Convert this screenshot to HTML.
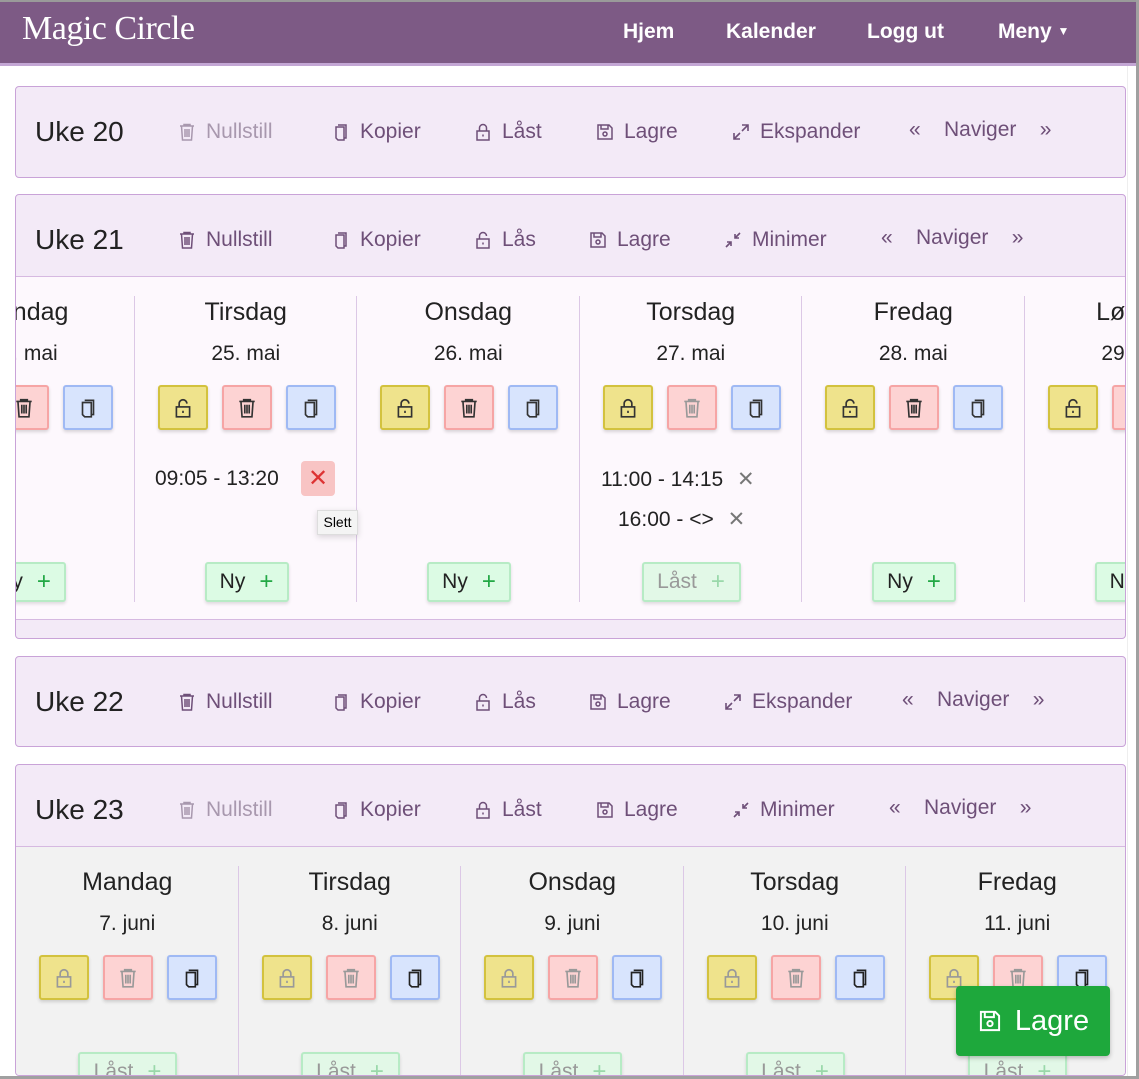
<!DOCTYPE html>
<html style="overflow:hidden;width:1139px;height:1079px"><head><meta charset="utf-8">
<style>
*{box-sizing:border-box;margin:0;padding:0}
body{width:1139px;height:1079px;overflow:hidden;background:#fff;font-family:"Liberation Sans",sans-serif;position:relative}
.a{position:absolute}
.nav{left:0;top:0;width:1139px;height:66px;background:#7d5a85;border-top:2px solid #9a9a9a;border-bottom:3px solid #c3a6d4}
.logo{left:22px;top:10px;color:#fff;font-family:"Liberation Serif",serif;font-size:34px;letter-spacing:-0.5px}
.nl{color:#fff;font-weight:bold;font-size:21px;top:20px}
.card{left:15px;width:1111px;border:1px solid #c9a3d8;border-radius:4px;background:#f3eaf7;overflow:hidden}
.uke{font-size:28px;color:#222;left:19px}
.hi{font-size:21px;color:#6e4f78;display:flex;align-items:center;gap:9px;white-space:nowrap}
.hi.g{color:#a898ae}
.hi svg{width:20px;height:20px;flex-shrink:0}
.body{left:0;width:1111px;overflow:hidden}
.col{position:absolute;top:0;width:222.5px;text-align:center}
.dn{font-size:25px;color:#222;position:absolute;width:100%;top:21px}
.dd{font-size:21px;color:#222;position:absolute;width:100%;top:65px}
.btns{position:absolute;top:108px;left:23px;display:flex;gap:14px}
.b{width:50px;height:45px;border-radius:3px;display:flex;align-items:center;justify-content:center;box-shadow:0 2px 3px rgba(0,0,0,.15)}
.y{background:#efe38c;border:2px solid #d3c23e}
.r{background:#fdd3d3;border:2px solid #f6a5a5}
.bl{background:#d8e4fd;border:2px solid #9fb9f4}
.b svg{width:22px;height:22px;flex-shrink:0}
.dv{position:absolute;top:0;bottom:0;width:1px;background:#dcc8e6}
.ny{position:absolute;height:40px;border:2px solid #b7ebc5;background:#dcfbe4;border-radius:3px;font-size:21px;color:#222;display:flex;align-items:center;justify-content:center;gap:14px;box-shadow:0 2px 3px rgba(0,0,0,.12)}
.ny .p{color:#22a845;font-size:24px}
.ny.f{color:#999;background:#e2f8e7}
.ny.f .p{color:#9ad8aa}
.t{font-size:21px;color:#222}
</style></head><body>
<svg width="0" height="0" style="position:absolute">
<defs>
<symbol id="trash" viewBox="0 0 20 20"><path d="M3 4h14M7 4V2.5h6V4M4.5 4l1 14h9l1-14M8 7v8M10 7v8M12 7v8" fill="none" stroke="currentColor" stroke-width="1.5"/></symbol>
<symbol id="copy" viewBox="0 0 20 20"><path d="M7 3h8v13h-2M5 5h8v13H7l-2-2z" fill="none" stroke="currentColor" stroke-width="1.5"/></symbol>
<symbol id="lockc" viewBox="0 0 20 20"><rect x="4" y="9" width="12" height="9" fill="none" stroke="currentColor" stroke-width="1.5"/><path d="M6.5 9V6a3.5 3.5 0 0 1 7 0v3M10 12.5v2" fill="none" stroke="currentColor" stroke-width="1.5"/></symbol>
<symbol id="locko" viewBox="0 0 20 20"><rect x="4" y="9" width="12" height="9" fill="none" stroke="currentColor" stroke-width="1.5"/><path d="M6.5 9V6a3.5 3.5 0 0 1 7 0M10 12.5v2" fill="none" stroke="currentColor" stroke-width="1.5"/></symbol>
<symbol id="save" viewBox="0 0 20 20"><path d="M3 3h11l3 3v11H3zM6 3v4h7V3" fill="none" stroke="currentColor" stroke-width="1.5"/><circle cx="10" cy="12" r="2" fill="none" stroke="currentColor" stroke-width="1.5"/></symbol>
<symbol id="exp" viewBox="0 0 20 20"><path d="M11 3h6v6M17 3l-6 6M9 17H3v-6M3 17l6-6" fill="none" stroke="currentColor" stroke-width="1.6"/></symbol>
<symbol id="min" viewBox="0 0 20 20"><path d="M17 3l-5 5M12 4v4h4M3 17l5-5M4 12h4v4" fill="none" stroke="currentColor" stroke-width="1.6"/></symbol>
</defs></svg>

<div class="a nav"></div>
<div class="a logo">Magic Circle</div>
<div class="a nl" style="left:623px">Hjem</div>
<div class="a nl" style="left:726px">Kalender</div>
<div class="a nl" style="left:867px">Logg ut</div>
<div class="a nl" style="left:998px">Meny <span style="font-size:12px;vertical-align:3px">▼</span></div>
<div class="a" style="left:1127px;top:66px;width:12px;height:1013px;background:#fff;border-left:1px solid #eee"></div>
<div class="a" style="left:1136px;top:0;width:3px;height:1079px;background:#a0a0a0"></div>

<div class="a card" style="top:86px;height:92px">
 <div class="a uke" style="top:29px">Uke 20</div>
 <div class="a hi g" style="left:161px;top:33px"><svg><use href="#trash"/></svg>Nullstill</div>
 <div class="a hi" style="left:315px;top:33px"><svg><use href="#copy"/></svg>Kopier</div>
 <div class="a hi" style="left:457px;top:33px"><svg><use href="#lockc"/></svg>Låst</div>
 <div class="a hi" style="left:579px;top:33px"><svg><use href="#save"/></svg>Lagre</div>
 <div class="a hi" style="left:715px;top:33px"><svg><use href="#exp"/></svg>Ekspander</div>
 <div class="a hi" style="left:893px;top:31px">«&nbsp;&nbsp;&nbsp;&nbsp;Naviger&nbsp;&nbsp;&nbsp;&nbsp;»</div>
</div>

<div class="a card" style="top:194px;height:445px">
 <div class="a uke" style="top:29px">Uke 21</div>
 <div class="a hi" style="left:161px;top:33px"><svg><use href="#trash"/></svg>Nullstill</div>
 <div class="a hi" style="left:315px;top:33px"><svg><use href="#copy"/></svg>Kopier</div>
 <div class="a hi" style="left:457px;top:33px"><svg><use href="#locko"/></svg>Lås</div>
 <div class="a hi" style="left:572px;top:33px"><svg><use href="#save"/></svg>Lagre</div>
 <div class="a hi" style="left:707px;top:33px"><svg><use href="#min"/></svg>Minimer</div>
 <div class="a hi" style="left:865px;top:31px">«&nbsp;&nbsp;&nbsp;&nbsp;Naviger&nbsp;&nbsp;&nbsp;&nbsp;»</div>
 <div class="a body" style="top:81px;height:344px;background:#fdf8fd;border-top:1px solid #d6b9e1;border-bottom:1px solid #d6b9e1">
  <div class="a" style="left:-104px;top:0;width:1400px;height:344px">
   <div class="dv" style="left:222px;top:19px;bottom:19px"></div>
   <div class="dv" style="left:444px;top:19px;bottom:19px"></div>
   <div class="dv" style="left:667px;top:19px;bottom:19px"></div>
   <div class="dv" style="left:889px;top:19px;bottom:19px"></div>
   <div class="dv" style="left:1112px;top:19px;bottom:19px"></div>
   <div class="col" style="left:0"><div class="dn">Mandag</div><div class="dd">24. mai</div>
    <div class="btns"><div class="b y" style="color:#333"><svg><use href="#locko"/></svg></div><div class="b r" style="color:#333"><svg><use href="#trash"/></svg></div><div class="b bl" style="color:#333"><svg><use href="#copy"/></svg></div></div>
    <div class="ny" style="left:70px;top:285px;width:84px">Ny <span class="p">+</span></div></div>
   <div class="col" style="left:222.5px"><div class="dn">Tirsdag</div><div class="dd">25. mai</div>
    <div class="btns"><div class="b y" style="color:#333"><svg><use href="#locko"/></svg></div><div class="b r" style="color:#333"><svg><use href="#trash"/></svg></div><div class="b bl" style="color:#333"><svg><use href="#copy"/></svg></div></div>
    <div class="ny" style="left:70px;top:285px;width:84px">Ny <span class="p">+</span></div></div>
   <div class="col" style="left:445px"><div class="dn">Onsdag</div><div class="dd">26. mai</div>
    <div class="btns"><div class="b y" style="color:#333"><svg><use href="#locko"/></svg></div><div class="b r" style="color:#333"><svg><use href="#trash"/></svg></div><div class="b bl" style="color:#333"><svg><use href="#copy"/></svg></div></div>
    <div class="ny" style="left:70px;top:285px;width:84px">Ny <span class="p">+</span></div></div>
   <div class="col" style="left:667.5px"><div class="dn">Torsdag</div><div class="dd">27. mai</div>
    <div class="btns"><div class="b y" style="color:#333"><svg><use href="#lockc"/></svg></div><div class="b r" style="color:#999"><svg><use href="#trash"/></svg></div><div class="b bl" style="color:#333"><svg><use href="#copy"/></svg></div></div>
    <div class="ny f" style="left:62px;top:285px;width:99px">Låst <span class="p">+</span></div></div>
   <div class="col" style="left:890px"><div class="dn">Fredag</div><div class="dd">28. mai</div>
    <div class="btns"><div class="b y" style="color:#333"><svg><use href="#locko"/></svg></div><div class="b r" style="color:#333"><svg><use href="#trash"/></svg></div><div class="b bl" style="color:#333"><svg><use href="#copy"/></svg></div></div>
    <div class="ny" style="left:70px;top:285px;width:84px">Ny <span class="p">+</span></div></div>
   <div class="col" style="left:1112.5px"><div class="dn">Lørdag</div><div class="dd">29. mai</div>
    <div class="btns"><div class="b y" style="color:#333"><svg><use href="#locko"/></svg></div><div class="b r" style="color:#333"><svg><use href="#trash"/></svg></div><div class="b bl" style="color:#333"><svg><use href="#copy"/></svg></div></div>
    <div class="ny" style="left:70px;top:285px;width:84px">Ny <span class="p">+</span></div></div>
  </div>
 </div>
</div>
<div class="a t" style="left:155px;top:467px">09:05 - 13:20</div>
<div class="a" style="left:301px;top:461px;width:34px;height:35px;background:#f8c4c4;border-radius:4px;color:#d33;font-size:24px;text-align:center;line-height:35px">✕</div>
<div class="a" style="left:317px;top:510px;width:41px;height:25px;background:#f4f4f4;border:1px solid #ddd;font-size:14px;line-height:23px;text-align:center;box-shadow:0 2px 6px rgba(0,0,0,.15)">Slett</div>
<div class="a t" style="left:601px;top:467px">11:00 - 14:15 <span style="color:#777;margin-left:8px">✕</span></div>
<div class="a t" style="left:618px;top:507px">16:00 - &lt;&gt; <span style="color:#777;margin-left:8px">✕</span></div>

<div class="a card" style="top:656px;height:91px">
 <div class="a uke" style="top:29px">Uke 22</div>
 <div class="a hi" style="left:161px;top:33px"><svg><use href="#trash"/></svg>Nullstill</div>
 <div class="a hi" style="left:315px;top:33px"><svg><use href="#copy"/></svg>Kopier</div>
 <div class="a hi" style="left:457px;top:33px"><svg><use href="#locko"/></svg>Lås</div>
 <div class="a hi" style="left:572px;top:33px"><svg><use href="#save"/></svg>Lagre</div>
 <div class="a hi" style="left:707px;top:33px"><svg><use href="#exp"/></svg>Ekspander</div>
 <div class="a hi" style="left:886px;top:31px">«&nbsp;&nbsp;&nbsp;&nbsp;Naviger&nbsp;&nbsp;&nbsp;&nbsp;»</div>
</div>

<div class="a card" style="top:764px;height:312px">
 <div class="a uke" style="top:29px">Uke 23</div>
 <div class="a hi g" style="left:161px;top:33px"><svg><use href="#trash"/></svg>Nullstill</div>
 <div class="a hi" style="left:315px;top:33px"><svg><use href="#copy"/></svg>Kopier</div>
 <div class="a hi" style="left:457px;top:33px"><svg><use href="#lockc"/></svg>Låst</div>
 <div class="a hi" style="left:579px;top:33px"><svg><use href="#save"/></svg>Lagre</div>
 <div class="a hi" style="left:715px;top:33px"><svg><use href="#min"/></svg>Minimer</div>
 <div class="a hi" style="left:873px;top:31px">«&nbsp;&nbsp;&nbsp;&nbsp;Naviger&nbsp;&nbsp;&nbsp;&nbsp;»</div>
 <div class="a body" style="top:81px;height:230px;background:#f2f2f2;border-top:1px solid #d6b9e1">
  <div class="a" style="left:0;top:0;width:1400px;height:230px">
   <div class="dv" style="left:222px;top:19px"></div>
   <div class="dv" style="left:444px;top:19px"></div>
   <div class="dv" style="left:667px;top:19px"></div>
   <div class="dv" style="left:889px;top:19px"></div>
   <div class="col" style="left:0"><div class="dn">Mandag</div><div class="dd">7. juni</div>
    <div class="btns"><div class="b y" style="color:#999"><svg><use href="#lockc"/></svg></div><div class="b r" style="color:#999"><svg><use href="#trash"/></svg></div><div class="b bl" style="color:#222"><svg><use href="#copy"/></svg></div></div>
    <div class="ny f" style="left:62px;top:205px;width:99px">Låst <span class="p">+</span></div></div>
   <div class="col" style="left:222.5px"><div class="dn">Tirsdag</div><div class="dd">8. juni</div>
    <div class="btns"><div class="b y" style="color:#999"><svg><use href="#lockc"/></svg></div><div class="b r" style="color:#999"><svg><use href="#trash"/></svg></div><div class="b bl" style="color:#222"><svg><use href="#copy"/></svg></div></div>
    <div class="ny f" style="left:62px;top:205px;width:99px">Låst <span class="p">+</span></div></div>
   <div class="col" style="left:445px"><div class="dn">Onsdag</div><div class="dd">9. juni</div>
    <div class="btns"><div class="b y" style="color:#999"><svg><use href="#lockc"/></svg></div><div class="b r" style="color:#999"><svg><use href="#trash"/></svg></div><div class="b bl" style="color:#222"><svg><use href="#copy"/></svg></div></div>
    <div class="ny f" style="left:62px;top:205px;width:99px">Låst <span class="p">+</span></div></div>
   <div class="col" style="left:667.5px"><div class="dn">Torsdag</div><div class="dd">10. juni</div>
    <div class="btns"><div class="b y" style="color:#999"><svg><use href="#lockc"/></svg></div><div class="b r" style="color:#999"><svg><use href="#trash"/></svg></div><div class="b bl" style="color:#222"><svg><use href="#copy"/></svg></div></div>
    <div class="ny f" style="left:62px;top:205px;width:99px">Låst <span class="p">+</span></div></div>
   <div class="col" style="left:890px"><div class="dn">Fredag</div><div class="dd">11. juni</div>
    <div class="btns"><div class="b y" style="color:#999"><svg><use href="#lockc"/></svg></div><div class="b r" style="color:#999"><svg><use href="#trash"/></svg></div><div class="b bl" style="color:#222"><svg><use href="#copy"/></svg></div></div>
    <div class="ny f" style="left:62px;top:205px;width:99px">Låst <span class="p">+</span></div></div>
  </div>
 </div>
</div>

<div class="a" style="left:956px;top:986px;width:154px;height:70px;background:#1ea83c;border-radius:4px;color:#fff;font-size:29px;display:flex;align-items:center;justify-content:center;gap:12px;box-shadow:0 2px 5px rgba(0,0,0,.25)"><svg width="26" height="26" viewBox="0 0 20 20" style="color:#fff;flex-shrink:0"><use href="#save"/></svg>Lagre</div>
<div class="a" style="left:0;top:1076px;width:1139px;height:3px;background:#a0a0a0"></div>
</body></html>
